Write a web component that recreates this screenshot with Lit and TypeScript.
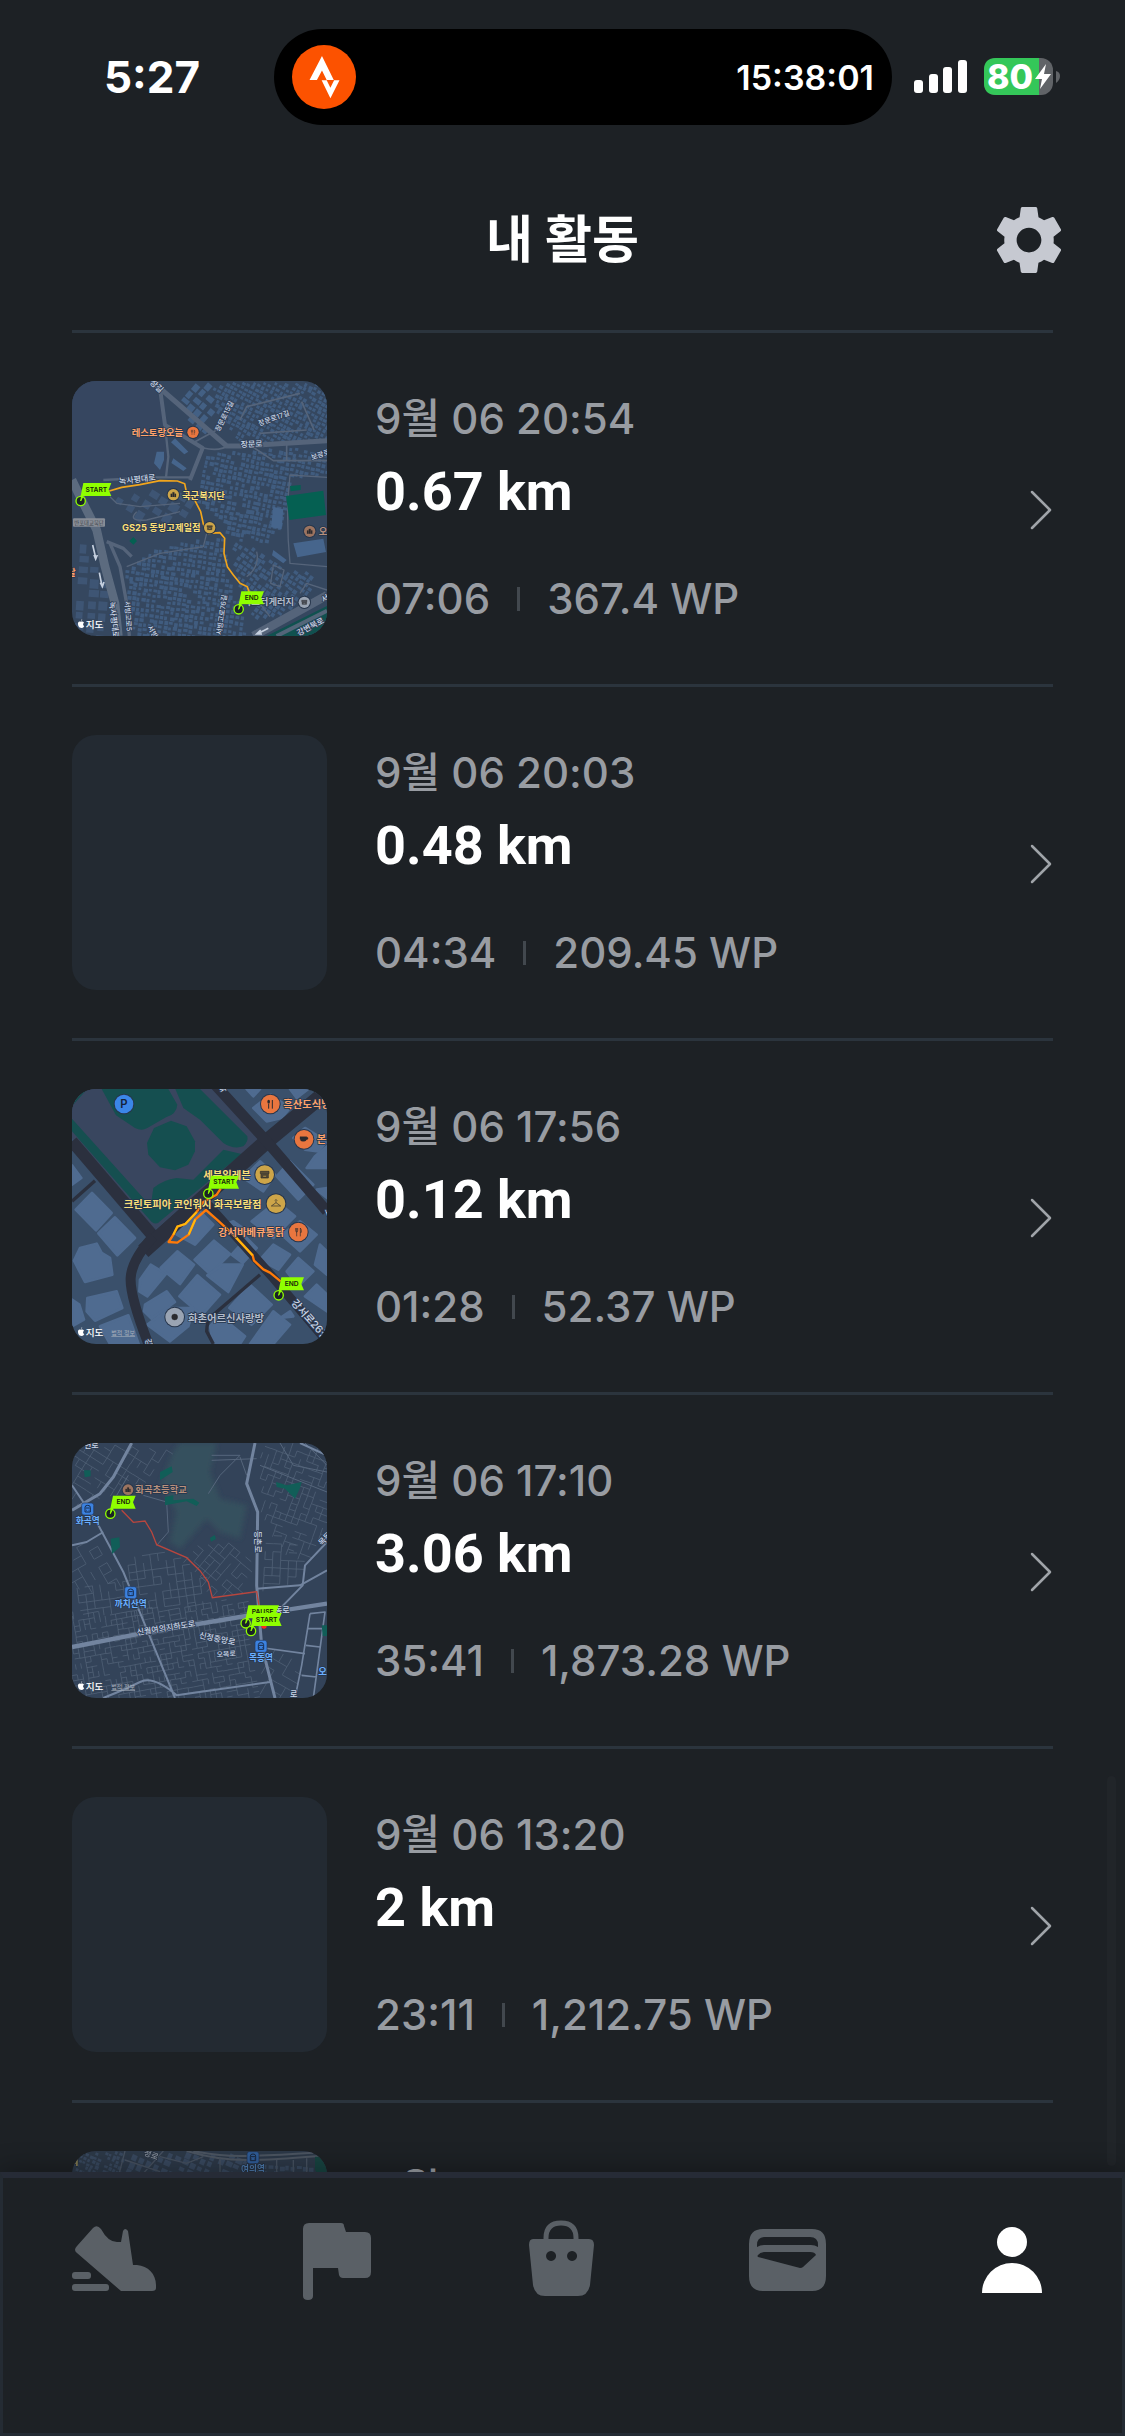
import { LitElement, html, svg, css, nothing } from 'lit';
import { customElement, property, state } from 'lit/decorators.js';
import { classMap } from 'lit/directives/class-map.js';

type Point = [number, number];

interface Activity {
  date: string;
  distance: string;
  time: string;
  points: string;
  map?: string;
}

const activities: Activity[] = [
  { date: '9월 06 20:54', distance: '0.67 km', time: '07:06', points: '367.4 WP', map: 'noksapyeong' },
  { date: '9월 06 20:03', distance: '0.48 km', time: '04:34', points: '209.45 WP' },
  { date: '9월 06 17:56', distance: '0.12 km', time: '01:28', points: '52.37 WP', map: 'hwagok' },
  { date: '9월 06 17:10', distance: '3.06 km', time: '35:41', points: '1,873.28 WP', map: 'mokdong' },
  { date: '9월 06 13:20', distance: '2 km', time: '23:11', points: '1,212.75 WP' },
  { date: '9월', distance: '', time: '', points: '', map: 'station' }
];

function random(seed: number) {
  let s = seed;
  return () => {
    s = (s * 16807) % 2147483647;
    return s / 2147483647;
  };
}

function inside(x: number, y: number, area: Point[]) {
  let hit = false;
  for (let i = 0, j = area.length - 1; i < area.length; j = i++) {
    const [xi, yi] = area[i];
    const [xj, yj] = area[j];
    if (yi > y !== yj > y && x < ((xj - xi) * (y - yi)) / (yj - yi) + xi) hit = !hit;
  }
  return hit;
}

// fills an area with small building footprints
function buildings(area: Point[], cell: number, angle: number, seed: number) {
  const rnd = random(seed);
  const cos = Math.cos((angle * Math.PI) / 180);
  const sin = Math.sin((angle * Math.PI) / 180);
  let d = '';
  for (let u = -1200; u < 1200; u += cell) {
    for (let v = -1200; v < 1200; v += cell) {
      const x = 420 + u * cos - v * sin + (rnd() - 0.5) * 4;
      const y = 420 + u * sin + v * cos + (rnd() - 0.5) * 4;
      const w = cell * (0.55 + rnd() * 0.35);
      const h = cell * (0.5 + rnd() * 0.35);
      if (!inside(x, y, area) || rnd() < 0.1) continue;
      d += `M${x.toFixed(0)} ${y.toFixed(0)}l${(w * cos).toFixed(1)} ${(w * sin).toFixed(1)}l${(-h * sin).toFixed(1)} ${(h * cos).toFixed(1)}l${(-w * cos).toFixed(1)} ${(-w * sin).toFixed(1)}z`;
    }
  }
  return d;
}

// broken street grid inside an area
function streets(area: Point[], cell: number, angle: number, seed: number) {
  const rnd = random(seed);
  const cos = Math.cos((angle * Math.PI) / 180);
  const sin = Math.sin((angle * Math.PI) / 180);
  let d = '';
  for (let u = -1200; u < 1200; u += cell) {
    for (let v = -1200; v < 1200; v += cell) {
      const x = 420 + u * cos - v * sin;
      const y = 420 + u * sin + v * cos;
      const a = rnd();
      const b = rnd();
      if (!inside(x, y, area)) continue;
      if (a < 0.6) d += `M${x.toFixed(0)} ${y.toFixed(0)}l${(cell * cos).toFixed(1)} ${(cell * sin).toFixed(1)}`;
      if (b < 0.6) d += `M${x.toFixed(0)} ${y.toFixed(0)}l${(-cell * sin).toFixed(1)} ${(cell * cos).toFixed(1)}`;
    }
  }
  return d;
}

const flag = (x: number, y: number, label: string, width: number) => svg`
  <path d="M${x + 8} ${y - 54}L${x + width} ${y - 54}L${x + width - 8} ${y - 34}L${x + width} ${y - 15}H${x + 5}L${x + 3} ${y}L${x - 3} ${y - 1}z" fill="#8fff00"/>
  <circle cx=${x} cy=${y} r="14" fill="#1b2226" stroke="#8fff00" stroke-width="4"/>
  <path d="M${x} ${y}l3 -16h5z" fill="#8fff00" stroke="#8fff00" stroke-width="3"/>
  <text x=${x + width / 2 + 1} y=${y - 28} class="flag">${label}</text>
`;

const poi = (x: number, y: number, r: number, kind: string, glyph: unknown) => svg`
  <circle cx=${x} cy=${y} r=${r + 3} fill="#27364c"/>
  <circle cx=${x} cy=${y} r=${r} class=${kind}/>
  <g transform="translate(${x} ${y}) scale(${r / 28})" fill="#2a2a2e" stroke="#2a2a2e">${glyph}</g>
`;

const fork = svg`<path d="M-8 -12V-4Q-8 0 -5 0V13M-2 -12V-4Q-2 0 -5 0M-5 -12V0M6 13V-12Q10 -8 9 1H6" fill="none" stroke-width="2"/>`;
const spoon = svg`<path d="M-5 0V14M6 -12V14" stroke-width="3"/><ellipse cx="-5" cy="-7" rx="4" ry="6" stroke="none"/>`;
const cup = svg`<path d="M-12 -8H8V-2Q7 6 0 6H-4Q-11 6 -12 -2zM8 -6Q14 -6 12 -2Q10 2 7 1" stroke-width="1"/>`;
const shop = svg`<path d="M-13 -10H13V-3H-13zM-11 -2V10H11V-2M-6 2H6V7H-6z" stroke-width="2" fill-rule="evenodd" fill-opacity="0.7"/>`;
const hanger = svg`<path d="M0 -3L-14 7H14zM0 -3V-7Q5 -10 1 -12Q-3 -12 -3 -9" fill="none" stroke-width="2"/>`;
const school = svg`<path d="M-13 12V-4H-6V12M-4 12V-12H5V12M7 12V-4H13V12z" stroke-width="1"/>`;
const dot = svg`<circle r="9"/>`;

const credit = svg`
  <path d="M63 753q3-1 4-5q-4 1-4 5M62 755c-5-2-9 1-8 8c1 7 5 12 9 10c4 2 7 0 10-5c-5-2-5-8-1-10c-3-4-6-4-10-3z" fill="#fff"/>
  <text x="77" y="774" class="brand">지도</text>
`;

const legal = svg`<text x="154" y="772" class="legal">법적 정보</text>`;

const station = (x: number, y: number, name: string) => svg`
  <rect x=${x - 18} y=${y - 18} width="36" height="36" rx="7" fill="#3c82e0" stroke="#233a62" stroke-width="2"/>
  <path d="M${x - 8} ${y + 9}V${y - 5}q0-6 8-6t8 6V${y + 9}zM${x - 6} ${y - 3}h12M${x - 5} ${y + 4}h2m6 0h2" fill="none" stroke="#162b4e" stroke-width="3"/>
  <text x=${x} y=${y + 44} class="label station">${name}</text>
`;

const blocks = [
  '96 345 155 405 108 457 47 395', '165 418 225 480 172 532 115 466', '60 510 110 497 125 525 150 540 157 590 75 612 42 548',
  '82 660 170 640 187 690 105 728 80 700', '36 665 58 680 72 725 36 745', '36 262 64 300 36 320', '120 745 205 712 236 798 150 798',
  '272 560 318 588 262 655 238 640 240 605', '352 520 402 560 360 618 302 570', '415 395 460 440 405 500 350 470',
  '462 488 510 528 450 588 404 545', '520 430 555 455 532 488 492 440', '488 560 548 560 505 642 442 592', '412 592 480 650 425 712 358 655',
  '255 680 320 640 345 672 275 722 252 700', '330 690 400 690 385 745 330 790 262 740', '560 480 590 510 548 555 515 530',
  '570 620 635 680 575 740 508 690', '478 712 555 775 540 798 460 798 450 745', '640 700 690 740 640 798 570 798',
  '632 50 690 90 665 120 620 130 580 90', '735 150 800 190 775 220 735 215 700 180', '690 250 760 320 715 365 650 295',
  '600 250 645 290 610 340 550 300', '765 235 801 205 801 270 740 270', '770 335 801 360 801 330', '650 370 705 415 640 480 575 430',
  '720 430 770 470 720 520 665 470', '640 500 690 530 655 575 600 545', '715 540 760 580 715 625 680 580', '780 500 801 520 801 590 765 560',
  '770 620 801 650 801 700 735 655', '690 700 700 715 660 720', '560 33 600 33 580 55', '690 33 745 33 710 60'
];

const maps: Record<string, unknown> = {
  noksapyeong: svg`
    <rect x="36" y="33" width="765" height="765" fill="#35475f"/>
    <path d="M36 33H275L325 160L320 310L60 340L36 330z" fill="#364660"/>
    <path d="${buildings([[320, 50], [450, 33], [470, 120], [495, 200], [420, 180]], 27, 40, 11)}" fill="#436084"/>
    <path d="${buildings([[460, 33], [801, 33], [801, 205], [540, 215], [470, 130]], 14, 28, 5)}" fill="#405c7f"/>
    <path d="${buildings([[440, 245], [720, 230], [801, 240], [801, 310], [685, 315], [670, 460], [620, 520], [500, 500], [480, 440], [400, 380]], 15, 12, 23)}" fill="#405c7f"/>
    <path d="${buildings([[160, 370], [370, 345], [410, 430], [230, 440]], 36, 32, 8)}" fill="#3e5574"/>
    <path d="${buildings([[190, 600], [270, 540], [430, 500], [490, 500], [500, 620], [530, 680], [560, 798], [220, 798]], 15, 8, 31)}" fill="#405c7f"/>
    <path d="${buildings([[505, 510], [590, 530], [670, 590], [760, 600], [740, 680], [640, 740], [580, 740], [540, 640]], 16, 35, 17)}" fill="#405c7f"/>
    <path d="${buildings([[60, 500], [120, 600], [150, 798], [36, 798], [36, 620]], 34, 4, 9)}" fill="#3e5574"/>
    <path d="M640 410l30 8l-5 60l-32-6zM700 520l90-14l8 40l-86 16zM640 540l40 30l-10 10l-34-24zM290 245h22v25l-12 30l-18-20zM345 205l40 40l-12 8l-40-36zM340 265l40 30l-10 8l-36-24z" fill="#46658c"/>
    <g fill="none" stroke="#55647a" stroke-linejoin="round">
      <path d="M275 33L500 228H540L801 212" stroke-width="15"/>
      <path d="M300 55L315 165L428 234L390 330" stroke-width="12"/>
      <path d="M315 165L325 260L318 322M130 330L290 322H395" stroke-width="7"/>
      <path d="M430 234Q480 245 510 225M570 225L640 272H801M600 190L740 180M680 215V270M725 95L762 180M540 150L560 110L720 70M405 215L470 180" stroke-width="5"/>
      <path d="M150 380L170 400L240 410L360 400M230 425Q200 455 260 450L360 425M801 322L690 315Q676 440 690 580L801 590M440 490L430 530L300 550L200 590M630 740L560 650M590 545Q600 590 560 620M640 585L672 600L660 650L632 640zM720 670L740 640L801 660" stroke-width="4"/>
      <path d="M36 330L70 400L110 480L135 590L165 700L175 798" stroke-width="26" stroke="#5c6b7f"/>
      <path d="M150 520L180 590L200 700L208 798M140 515L190 535L215 560" stroke-width="10"/>
      <path d="M580 798L801 676" stroke-width="26"/>
    </g>
    <path d="M620 798L801 708V798z" fill="#10514f"/>
    <path d="M650 798L801 722" stroke="#536579" stroke-width="12"/>
    <path d="M678 378L790 362L798 435L688 450zM690 348L722 345V360L692 364zM208 513l12-12l11 12l-11 11z" fill="#056052"/>
    <path d="M98 525l9 38M102 555l5 12l5-12M118 608l8 40M121 638l6 12l5-14M625 775l-32 16M602 780l-12 12l16 0" fill="none" stroke="#c6d0df" stroke-width="5"/>
    <rect x="39" y="445" width="96" height="25" rx="3" fill="#888d96"/>
    <text x="87" y="465" class="tiny">반포대교북단</text>
    <text class="road" x="268" y="40" transform="rotate(42 268 40)">장길</text>
    <text class="road" x="178" y="343" transform="rotate(-7 178 343)">녹사평대로</text>
    <text class="road" x="542" y="232" transform="rotate(-2 542 232)">장문로</text>
    <text class="road small" x="478" y="186" transform="rotate(-64 478 186)">장문로15길</text>
    <text class="road small" x="598" y="168" transform="rotate(-20 598 168)">장문로17길</text>
    <text class="road small" x="756" y="270" transform="rotate(-18 756 270)">보광로</text>
    <text class="road" x="148" y="696" transform="rotate(84 148 696)">녹사평대로</text>
    <text class="road small" x="194" y="694" transform="rotate(86 194 694)">서빙고로5</text>
    <text class="road small" x="484" y="796" transform="rotate(-82 484 796)">서빙고로76길</text>
    <text class="road small" x="262" y="772" transform="rotate(60 262 772)">서빙</text>
    <text class="road" x="716" y="798" transform="rotate(-28 716 798)">강변북로</text>
    <text class="road" x="790" y="698" transform="rotate(-28 790 698)">서빙</text>
    <text x="215" y="197" class="label food">레스토랑오늘</text>
    ${poi(399, 187, 17, 'food-dot', fork)}
    <path d="M148 363L185 352L240 344L300 332L352 333L374 341L380 370L405 392L422 425L430 462L445 490L480 488L494 505L492 550L502 590L520 615L540 640L562 650L570 675" fill="none" stroke="#f1a51c" stroke-width="5" stroke-linejoin="round"/>
    ${poi(340, 374, 17, 'gold-dot', school)}
    <text x="366" y="386" class="label gold">국군복지단</text>
    ${poi(449, 473, 17, 'gold-dot', shop)}
    <text x="186" y="484" class="label gold">GS25 동빙고제일점</text>
    ${poi(749, 484, 17, 'brown-dot', school)}
    <text x="776" y="494" class="label brown">오산</text>
    <text x="22" y="618" class="label food">달</text>
    <text x="548" y="706" class="label grey">마스터게러지</text>
    ${poi(733, 697, 17, 'grey-dot', shop)}
    ${flag(62, 393, 'START', 92)}
    ${flag(536, 718, 'END', 76)}
    ${credit}
  `,
  hwagok: svg`
    <rect x="36" y="33" width="765" height="765" fill="#3a506b"/>
    ${blocks.map(b => svg`<polygon points=${b} fill="#4f6b90" stroke="#4f6b90" stroke-width="8" stroke-linejoin="round"/>`)}
    <path d="M36 33H460L600 180L280 460L36 180z" fill="#39465f"/>
    <path d="M125 33H325L352 80Q350 108 318 118L262 150Q245 160 225 150L168 112zM346 33H420L562 175Q566 190 550 205Q520 215 490 195L420 125L370 90zM36 85L82 33H36zM36 122L272 385L280 330Q310 305 350 300L400 305L490 215L545 228L300 430Q290 442 275 432L36 160z" fill="#154f50"/>
    <path d="M333 128L380 145L405 190V220L385 260L345 277L300 268L265 230L261 195L282 150z" fill="#154f50"/>
    <g fill="none" stroke="#2b303e">
      <path d="M36 190L280 475" stroke-width="36"/>
      <path d="M250 520L620 190L801 40" stroke-width="46"/>
      <path d="M280 475Q215 545 212 600T270 810" stroke-width="30"/>
      <path d="M465 20L620 190L801 400" stroke-width="32"/>
      <path d="M430 365L640 600L801 790" stroke-width="28"/>
      <path d="M600 590L455 715Q440 730 440 760L460 798M36 370L105 308" stroke-width="10"/>
    </g>
    <text class="road" x="482" y="44" transform="rotate(-30 482 44)">화</text>
    <text class="road big" x="692" y="676" transform="rotate(48 692 676)">강서로26길</text>
    <text class="road" x="256" y="784" transform="rotate(80 256 784)">강서</text>
    <text class="road" x="794" y="395" transform="rotate(70 794 395)">로</text>
    <text x="430" y="304" class="label gold big">세븐일레븐</text>
    ${poi(614, 290, 28, 'gold-dot', shop)}
    <path d="M482 332L470 350L430 372L410 402L376 438L352 446L340 470L326 492L352 494L386 470L406 424L438 396L470 424L520 470L548 500L578 532L582 548L610 574L630 584L662 610" fill="none" stroke="#ff7a08" stroke-width="7" stroke-linejoin="round"/>
    <path d="M410 402L376 438L352 446L340 470M406 424L386 470M520 470L548 500L578 532" fill="none" stroke="#ffb90c" stroke-width="6"/>
    <text x="191" y="389" class="label gold big">크린토피아 코인워시 화곡보람점</text>
    ${poi(648, 377, 28, 'gold-dot', hanger)}
    <text x="474" y="474" class="label food big">강서바베큐통닭</text>
    ${poi(715, 462, 28, 'food-dot', fork)}
    ${poi(631, 78, 28, 'food-dot', spoon)}
    <text x="670" y="90" class="label food big">흑산도식당</text>
    ${poi(732, 184, 28, 'food-dot', cup)}
    <text x="770" y="196" class="label food big">본죽</text>
    ${poi(192, 78, 28, 'blue-dot', nothing)}
    <text x="192" y="91" class="parking">P</text>
    ${poi(344, 717, 28, 'grey-dot', dot)}
    <text x="384" y="731" class="label grey big">화촌어르신사랑방</text>
    ${flag(445, 347, 'START', 92)}
    ${flag(656, 652, 'END', 76)}
    ${credit}${legal}
  `,
  mokdong: svg`
    <rect x="36" y="33" width="765" height="765" fill="#334359"/>
    <g filter="url(#soft)">
      <path d="M360 33H470L450 120L480 200L560 220L540 320L480 300L440 260L360 350L330 330L350 240L300 160L340 60z" fill="#34545f" fill-opacity="0.75"/>
    </g>
    <g fill="none" stroke="#56667c" stroke-width="2">
      <path d="${streets([[36, 33], [330, 33], [290, 110], [150, 190], [36, 220]], 23, 32, 4)}"/>
      <path d="${streets([[600, 33], [801, 33], [801, 310], [720, 400], [640, 300], [600, 200]], 19, 20, 7)}"/>
      <path d="${streets([[370, 370], [460, 300], [560, 370], [560, 470], [460, 490]], 22, 40, 3)}"/>
      <path d="${streets([[200, 360], [300, 350], [440, 450], [440, 510], [36, 560], [36, 470], [190, 440]], 23, -8, 12)}"/>
      <path d="${streets([[36, 545], [550, 500], [590, 798], [36, 798]], 16, -10, 15)}"/>
      <path d="${streets([[36, 330], [120, 320], [200, 440], [36, 470]], 28, 60, 16)}"/>
      <path d="${streets([[600, 290], [690, 330], [730, 420], [600, 470]], 24, 3, 18)}"/>
      <path d="${streets([[590, 620], [720, 660], [710, 798], [620, 798]], 28, 30, 22)}"/>
      <path d="M250 190L320 210L325 300L290 340M445 185L480 130L540 70H455M560 130L540 75M455 85L590 80M205 130L170 190M600 100L801 180M660 33L700 100L801 120M735 33L801 100" stroke-width="3"/>
    </g>
    <g fill="none" stroke="#72849f" stroke-linejoin="round">
      <path d="M215 33L160 135L120 185L36 235M585 33L560 155L593 240L590 460L605 640L645 798" stroke-width="9"/>
      <path d="M36 160L110 270L190 420L235 530L345 798M36 340L80 330L130 300M130 798Q200 770 240 750T350 790L630 750M590 470L720 460L801 415" stroke-width="6"/>
      <path d="M36 645L240 605L540 555L801 515" stroke-width="13"/>
      <path d="M720 33L801 70M801 330L735 400L728 460L660 530" stroke-width="6"/>
      <path d="M590 645L735 665M750 545L725 700L705 798M750 545L795 540L760 798M745 590H788M738 640L780 645M725 730L770 735" stroke-width="5"/>
    </g>
    <path d="M300 120L335 103L338 120L300 145zM72 115h20v18l-18 3zM315 195L340 190V205L400 200L418 212L410 222L380 208L315 220zM450 318l14-9l4 12l-15 8zM152 320L178 316L180 345L156 366zM648 150L680 160L725 150L720 168L705 200L675 170L650 165zM785 580H801V612H788z" fill="#115e58"/>
    <text class="road" x="72" y="48">변로</text>
    <text class="road" x="586" y="296" transform="rotate(90 586 296)">등촌로</text>
    <text class="road" x="232" y="610" transform="rotate(-9 232 610)">신월여의지하도로</text>
    <text class="road" x="416" y="617" transform="rotate(12 416 617)">신정중앙로</text>
    <text class="road small" x="470" y="675" transform="rotate(-3 470 675)">오목로</text>
    <text class="road" x="645" y="543">동로</text>
    <text class="road" x="785" y="342" transform="rotate(-45 785 342)">목동</text>
    <text class="road" x="690" y="794">로</text>
    ${poi(204, 173, 16, 'brown-dot', school)}
    <text x="226" y="183" class="label brown">화곡초등학교</text>
    ${station(83, 231, '화곡역')}
    ${station(212, 482, '까치산역')}
    ${station(603, 643, '목동역')}
    <text x="775" y="728" class="label blue">오목교</text>
    <path d="M185 235L220 271L255 267L275 300L290 338L380 377L420 416L445 450L457 497L590 479L597 520L605 580" fill="none" stroke="#b8463e" stroke-width="4"/>
    <circle cx="612" cy="582" r="8" fill="#ff2a1c"/>
    ${flag(151, 245, 'END', 76)}
    ${flag(557, 574, 'PAUSE', 100)}
    ${flag(573, 597, 'START', 92)}
    ${credit}${legal}
  `,
  station: svg`
    <rect x="36" y="33" width="765" height="765" fill="#37485f"/>
    <path d="${buildings([[36, 33], [190, 33], [180, 130], [36, 130]], 13, 22, 6)}" fill="#4a6384"/>
    <path d="${buildings([[190, 33], [560, 33], [560, 130], [190, 130]], 24, 24, 19)}" fill="#4a6384"/>
    <path d="${buildings([[590, 66], [760, 66], [760, 130], [590, 130]], 17, 2, 14)}" fill="#4a6384"/>
    <path d="M380 33Q470 60 560 60T801 46M400 33Q480 50 560 48T760 38" fill="none" stroke="#6a7688" stroke-width="6"/>
    <path d="M195 33L175 110M310 33L250 100M195 60L300 95M300 50L380 70L430 50M480 50V130M650 60V130M700 60V130M740 55V130" fill="none" stroke="#617086" stroke-width="4"/>
    <path d="M765 50H801V120H785L765 90z" fill="#145a52"/>
    <text class="road" x="250" y="45" transform="rotate(20 250 45)">청로</text>
    <text x="30" y="76" class="label gold">시</text>
    ${station(579, 53, '여의역')}
  `
};

const tabs = [
  {
    id: 'walk',
    label: '걷기',
    icon: svg`
      <path d="M21 8Q25 4 29 9Q36 22 45 22H49L51 11Q53 7 56 11L61 45H65C76 46 84 54 84 65V68Q84 71 80 71H49L5 33Q1 30 5 26z"/>
      <rect x="0" y="52" width="19" height="7" rx="3"/>
      <rect x="0" y="64" width="37" height="7" rx="3"/>`
  },
  {
    id: 'challenge',
    label: '챌린지',
    icon: svg`<path d="M13 3H45Q48 3 48 6L50 12H69Q75 12 75 18V52Q75 58 69 58H47Q44 58 43 55L42 48H17V76Q17 80 12 80T7 76V9Q7 3 13 3z"/>`
  },
  {
    id: 'shop',
    label: '상점',
    icon: svg`
      <path d="M25 22V18Q25 3 40 3T55 18V22" fill="none" stroke="currentColor" stroke-width="5"/>
      <path fill-rule="evenodd" d="M12 19H68Q73 19 73 25L69 65Q67 76 57 76H24Q14 76 12 65L8 25Q8 19 12 19zM30 31a5 5 0 1 0 .1 0zM51 31a5 5 0 1 0 .1 0z"/>`
  },
  {
    id: 'wallet',
    label: '지갑',
    icon: svg`<path fill-rule="evenodd" d="M18 9H67Q81 9 81 24V56Q81 71 67 71H18Q4 71 4 56V24Q4 9 18 9zM12 27V25Q12 17 20 17H65Q73 17 73 25V27Q70 25 66 25H19Q15 25 12 27zM13 35Q15 32 20 32H65Q70 32 71 35L58 47Q57 48 55 48L13 37Q12 36 13 35z"/>`
  },
  {
    id: 'me',
    label: '내 활동',
    icon: svg`<circle cx="43" cy="22" r="15"/><path d="M13 73A30 30 0 0 1 73 73z"/>`
  }
];

@customElement('route-map')
export class RouteMap extends LitElement {
  @property() name = '';

  static styles = css`
    :host { display: block; }
    svg {
      display: block;
      width: 100%;
      height: 100%;
    }
    text { font-family: Inter, 'Noto Sans CJK KR', sans-serif; }
    .label {
      font-size: 28px;
      font-weight: 700;
      paint-order: stroke;
      stroke: #25344b;
      stroke-width: 4px;
      stroke-linejoin: round;
    }
    .label.big { font-size: 31px; }
    .label.food { fill: #ffa36b; }
    .label.gold { fill: #fadf78; }
    .label.brown { fill: #b8917d; }
    .label.grey { fill: #b1bbca; }
    .label.blue { fill: #6bb0ff; }
    .label.station {
      font-size: 26px;
      fill: #6bb0ff;
      text-anchor: middle;
    }
    .road {
      font-size: 24px;
      font-weight: 500;
      fill: #ccd7e8;
      paint-order: stroke;
      stroke: #2f3f56;
      stroke-width: 5px;
    }
    .road.small { font-size: 21px; }
    .road.big { font-size: 31px; }
    .tiny {
      font-size: 16px;
      fill: #41464e;
      text-anchor: middle;
    }
    .flag {
      font-size: 20px;
      font-weight: 600;
      fill: #14240a;
      text-anchor: middle;
    }
    .parking {
      font-size: 34px;
      font-weight: 600;
      fill: #14223c;
      text-anchor: middle;
    }
    .brand {
      font-size: 29px;
      font-weight: 500;
      fill: #fff;
    }
    .legal {
      font-size: 18px;
      fill: #a7afbb;
      text-decoration: underline;
    }
    .food-dot { fill: #e9763f; }
    .gold-dot { fill: #cda549; }
    .brown-dot { fill: #9c7460; }
    .grey-dot { fill: #9aa4b3; }
    .blue-dot { fill: #3b86e8; }
  `;

  render() {
    return html`
      <svg viewBox="36 33 765 765" aria-hidden="true">
        <defs>
          <filter id="soft"><feGaussianBlur stdDeviation="8"/></filter>
        </defs>
        ${maps[this.name]}
      </svg>
    `;
  }
}

@customElement('activity-row')
export class ActivityRow extends LitElement {
  @property({ attribute: false }) activity!: Activity;

  static styles = css`
    :host {
      display: block;
      border-top: 3px solid #2b343d;
    }
    .row {
      display: flex;
      gap: 48px;
      padding: 48px 0;
      color: inherit;
      text-decoration: none;
    }
    .thumb {
      flex: none;
      width: 255px;
      height: 255px;
      border-radius: 24px;
      overflow: hidden;
      background: #232a32;
    }
    .thumb.loading { opacity: 0.6; }
    .thumb route-map { height: 100%; }
    .info {
      flex: 1;
      padding-top: 14px;
    }
    .date, .stats {
      font-size: 42px;
      line-height: 48px;
      font-weight: 500;
      color: #989ca2;
    }
    .distance {
      margin: 16px 0 50px;
      font-family: Roboto, sans-serif;
      font-size: 54px;
      line-height: 66px;
      font-weight: 700;
      color: #fff;
    }
    .stats {
      display: flex;
      align-items: center;
      gap: 27px;
    }
    .bar {
      width: 3px;
      height: 24px;
      background: #42484e;
    }
    .arrow {
      flex: none;
      align-self: center;
      width: 24px;
      height: 42px;
    }
  `;

  render() {
    const a = this.activity;
    return html`
      <a class="row" href="#activity">
        <div class=${classMap({ thumb: true, loading: !a.distance })}>
          ${a.map ? html`<route-map .name=${a.map}></route-map>` : ''}
        </div>
        <div class="info">
          <div class="date">${a.date}</div>
          <div class="distance">${a.distance}</div>
          ${a.time ? html`
            <div class="stats">
              <span>${a.time}</span>
              <span class="bar"></span>
              <span>${a.points}</span>
            </div>
          ` : ''}
        </div>
        <svg class="arrow" viewBox="0 0 24 42" aria-hidden="true">
          <path d="M3 4L21 22L3 40" fill="none" stroke="#a0a4a9" stroke-width="2.5" stroke-linecap="round" stroke-linejoin="round"/>
        </svg>
      </a>
    `;
  }
}

@customElement('app-root')
export class AppRoot extends LitElement {
  @state() private tab = 'me';

  static styles = css`
    :host {
      display: flex;
      flex-direction: column;
      height: 100vh;
      background: #1d2125;
      color: #fff;
      font-family: Inter, 'Noto Sans CJK KR', sans-serif;
    }
    .status {
      display: flex;
      align-items: center;
      padding: 29px 65px 1px 0;
    }
    .clock {
      box-sizing: border-box;
      width: 274px;
      padding-left: 30px;
      text-align: center;
      font-size: 44px;
      font-weight: 700;
    }
    .island {
      flex: 1;
      display: flex;
      align-items: center;
      justify-content: space-between;
      box-sizing: border-box;
      height: 96px;
      padding: 0 18px;
      margin-right: 22px;
      border-radius: 48px;
      background: #000;
      font-size: 34px;
      font-weight: 600;
    }
    .strava {
      width: 64px;
      height: 64px;
    }
    .signal {
      width: 53px;
      height: 34px;
      margin-right: 17px;
      fill: #fff;
    }
    .battery {
      position: relative;
      width: 76px;
      height: 38px;
    }
    .battery svg {
      display: block;
      width: 100%;
      height: 100%;
    }
    .level {
      position: absolute;
      left: 3px;
      top: 0;
      font-size: 34px;
      line-height: 38px;
      font-weight: 800;
    }
    header {
      display: grid;
      grid-template-columns: 66px 1fr 66px;
      align-items: center;
      height: 180px;
      padding: 24px 63px 0;
    }
    h1 {
      grid-column: 2;
      margin: 0;
      text-align: center;
      font-size: 51px;
      line-height: 72px;
      font-weight: 700;
    }
    .settings {
      padding: 0;
      border: 0;
      background: none;
      cursor: pointer;
    }
    .settings svg {
      display: block;
      width: 66px;
      height: 66px;
      fill: #c6c9d1;
    }
    main {
      position: relative;
      flex: 1;
      min-height: 0;
      padding: 0 72px;
      overflow: hidden;
    }
    .scroll {
      position: absolute;
      right: 9px;
      bottom: 6px;
      width: 9px;
      height: 390px;
      border-radius: 5px;
      background: #212529;
    }
    nav {
      position: relative;
      display: flex;
      justify-content: space-between;
      box-sizing: border-box;
      height: 264px;
      padding: 42px 69px 0;
      border: 3px solid #242b33;
      border-top: 6px solid #262b36;
      background: #1d2125;
      box-shadow: 0 -3px 24px rgba(0, 0, 0, 0.3);
    }
    .tab {
      width: 84px;
      height: 84px;
      color: #5a6066;
    }
    .tab.active { color: #fff; }
    .tab svg {
      display: block;
      width: 84px;
      height: 84px;
      fill: currentColor;
    }
  `;

  private _select(e: Event, id: string) {
    e.preventDefault();
    this.tab = id;
  }

  render() {
    return html`
      <div class="status">
        <div class="clock">5:27</div>
        <div class="island">
          <svg class="strava" viewBox="98 77 190 190" aria-hidden="true">
            <circle cx="193" cy="172" r="95" fill="#fc5200"/>
            <path d="M187 110L222 181H201L187 153L172 181H150zM186 182H201L212 204L223 182H239L212 235z" fill="#fff"/>
          </svg>
          <span>15:38:01</span>
        </div>
        <svg class="signal" viewBox="0 0 53 34" aria-hidden="true">
          <rect x="0" y="20" width="9" height="13" rx="3"/>
          <rect x="15" y="14" width="9" height="19" rx="3"/>
          <rect x="29" y="7" width="9" height="26" rx="3"/>
          <rect x="44" y="0" width="9" height="33" rx="3"/>
        </svg>
        <div class="battery">
          <svg viewBox="0 0 76 38" aria-hidden="true">
            <rect width="69" height="37" rx="12" fill="#606367"/>
            <path d="M12 0H55V37H12Q0 37 0 25V12Q0 0 12 0z" fill="#34c759"/>
            <path d="M72 13Q76 14 76 18T72 25z" fill="#606367"/>
            <path d="M62 6L51 21H58L56 31L67 16H60z" fill="#fff"/>
          </svg>
          <span class="level">80</span>
        </div>
      </div>

      <header>
        <h1>내 활동</h1>
        <button class="settings" aria-label="설정">
          <svg viewBox="2.4 2.4 19.2 19.2" aria-hidden="true">
            <path d="M19.14 12.94c.04-.3.06-.61.06-.94 0-.32-.02-.64-.07-.94l2.03-1.58c.18-.14.23-.41.12-.61l-1.92-3.32c-.12-.22-.37-.29-.59-.22l-2.39.96c-.5-.38-1.03-.7-1.62-.94l-.36-2.54c-.04-.24-.24-.41-.48-.41h-3.84c-.24 0-.43.17-.47.41l-.36 2.54c-.59.24-1.13.57-1.62.94l-2.39-.96c-.22-.08-.47 0-.59.22L2.74 8.87c-.12.21-.08.47.12.61l2.03 1.58c-.05.3-.09.63-.09.94s.02.64.07.94l-2.03 1.58c-.18.14-.23.41-.12.61l1.92 3.32c.12.22.37.29.59.22l2.39-.96c.5.38 1.03.7 1.62.94l.36 2.54c.05.24.24.41.48.41h3.84c.24 0 .44-.17.47-.41l.36-2.54c.59-.24 1.13-.56 1.62-.94l2.39.96c.22.08.47 0 .59-.22l1.92-3.32c.12-.22.07-.47-.12-.61l-2.01-1.58zM12 15.6c-1.98 0-3.6-1.62-3.6-3.6s1.62-3.6 3.6-3.6 3.6 1.62 3.6 3.6-1.62 3.6-3.6 3.6z"/>
          </svg>
        </button>
      </header>

      <main>
        ${activities.map(a => html`<activity-row .activity=${a}></activity-row>`)}
        <div class="scroll"></div>
      </main>

      <nav>
        ${tabs.map(t => html`
          <a
            class=${classMap({ tab: true, active: t.id === this.tab })}
            href="#${t.id}"
            aria-label=${t.label}
            @click=${(e: Event) => this._select(e, t.id)}
          >
            <svg viewBox="0 0 84 84" aria-hidden="true">${t.icon}</svg>
          </a>
        `)}
      </nav>
    `;
  }
}
